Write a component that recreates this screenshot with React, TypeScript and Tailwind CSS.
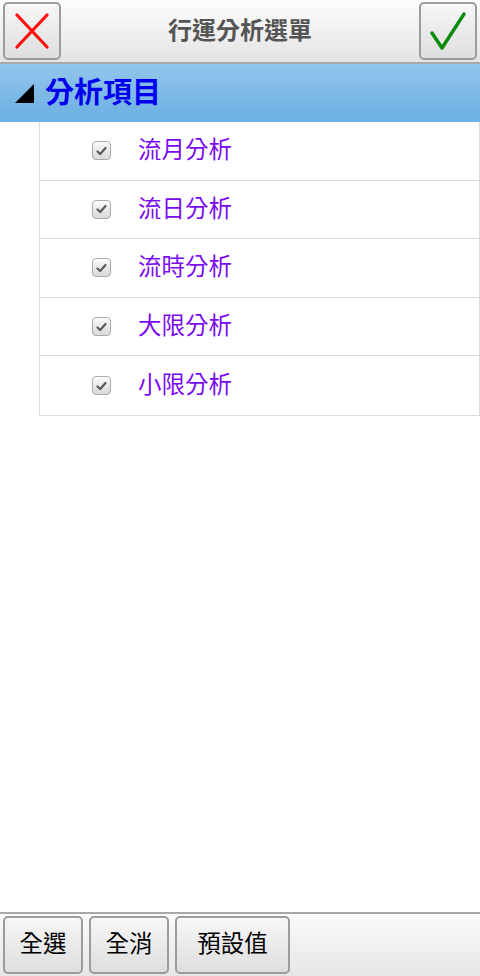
import React from 'react';

const font = { fontFamily: '"Liberation Sans", "Noto Sans CJK TC", sans-serif' };

const items = ['流月分析', '流日分析', '流時分析', '大限分析', '小限分析'];

function CheckBox() {
  return (
    <span className="w-[19px] h-[19px] rounded-[4px] border border-[#a9a9a9] bg-gradient-to-b from-[#fafafa] to-[#d9d9d9] shadow-[inset_0_1px_0_#fff] flex items-center justify-center">
      <svg width="11" height="10" viewBox="0 0 11 10">
        <path d="M1.5 5.5 L4.2 8 L9.5 2" stroke="#5a5a5a" strokeWidth="2.2" fill="none" strokeLinecap="round" strokeLinejoin="round" />
      </svg>
    </span>
  );
}

function ToolButton({ children, className = '' }: { children: React.ReactNode; className?: string }) {
  return (
    <button className={`h-[58px] rounded-[5px] border-2 border-[#9c9c9c] bg-gradient-to-b from-[#f7f7f7] to-[#dedede] shadow-[inset_0_1px_0_#fff] flex items-center justify-center ${className}`}>
      {children}
    </button>
  );
}

export default function App() {
  return (
    <div className="w-[480px] h-[976px] bg-white flex flex-col" style={font}>
      <div className="h-[64px] flex items-center justify-between px-[3px] bg-gradient-to-b from-[#fdfdfd] to-[#e4e4e4] border-b-2 border-[#a8a8a8]">
        <ToolButton className="w-[58px]">
          <svg width="34" height="36" viewBox="0 0 34 36">
            <path d="M2 2 L32 34 M32 2 L2 34" stroke="#ff1010" strokeWidth="3.2" strokeLinecap="round" />
          </svg>
        </ToolButton>
        <div className="text-[24px] font-bold text-[#555]">行運分析選單</div>
        <ToolButton className="w-[58px]">
          <svg width="38" height="40" viewBox="0 0 38 40">
            <path d="M3 22 L13 37 L35 3" stroke="#0a8a0a" strokeWidth="3.4" fill="none" strokeLinecap="round" strokeLinejoin="round" />
          </svg>
        </ToolButton>
      </div>
      <div className="h-[58px] flex items-center gap-[11px] pl-[15px] bg-gradient-to-b from-[#92c6ec] to-[#6bafe2]">
        <svg width="19" height="19" viewBox="0 0 19 19">
          <path d="M0 19 L19 0 L19 19 Z" fill="#000" />
        </svg>
        <div className="text-[29px] font-bold text-[#0000ee] leading-none">分析項目</div>
      </div>
      <div className="ml-[39px] border-l border-r border-b border-[#dcdcdc]">
        {items.map((t, i) => (
          <div
            key={t}
            className={`h-[58.6px] flex items-center pl-[52px] gap-[27px] ${i < items.length - 1 ? 'border-b border-[#dcdcdc]' : ''}`}
          >
            <CheckBox />
            <span className="text-[23.5px] text-[#7b0bf0]">{t}</span>
          </div>
        ))}
      </div>
      <div className="flex-1" />
      <div className="h-[64px] flex items-center gap-[6px] px-[3px] border-t-2 border-[#a8a8a8] bg-gradient-to-b from-[#fbfbfb] to-[#e6e6e6]">
        <ToolButton className="w-[80px] text-[23.5px] text-black">全選</ToolButton>
        <ToolButton className="w-[80px] text-[23.5px] text-black">全消</ToolButton>
        <ToolButton className="w-[115px] text-[23.5px] text-black">預設值</ToolButton>
      </div>
    </div>
  );
}
